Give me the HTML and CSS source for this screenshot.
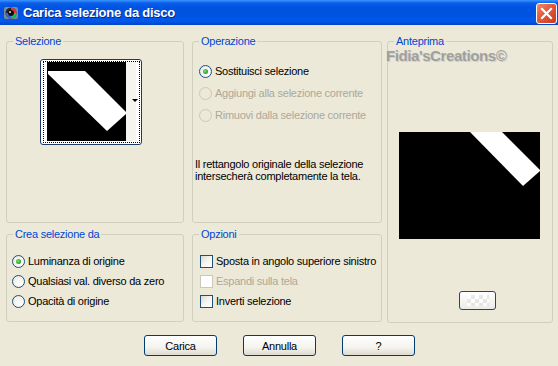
FILE: index.html
```html
<!DOCTYPE html>
<html>
    <head>
        <meta charset="UTF-8">
        <title>Carica selezione da disco</title>
        <link rel="stylesheet" href="styles.css">
    </head>
    <body>
        <div class="window">
            <div class="titlebar">
                <svg class="app-icon" width="16" height="16" viewBox="0 0 16 16">
                    <rect x="1" y="2" width="14" height="12" rx="2" fill="#7a8a9a"/>
                    <circle cx="8" cy="8" r="5.5" fill="#222"/>
                    <path d="M8 2.5 A5.5 5.5 0 0 1 13.5 8 L8 8 Z" fill="#e33"/>
                    <path d="M13.5 8 A5.5 5.5 0 0 1 8 13.5 L8 8 Z" fill="#2b6"/>
                    <path d="M8 13.5 A5.5 5.5 0 0 1 2.5 8 L8 8 Z" fill="#36d"/>
                    <circle cx="8" cy="8" r="3" fill="#111"/>
                    <circle cx="7" cy="7" r="1" fill="#ddd"/>
                </svg>
                <span class="title">Carica selezione da disco</span>
                <div class="close-btn">
                    <svg width="13" height="13" viewBox="0 0 13 13">
                        <path d="M2 2 L11 11 M11 2 L2 11" stroke="#fff" stroke-width="2.2" stroke-linecap="square"/>
                    </svg>
                </div>
            </div>

            <div class="content">
                <fieldset class="group sel-group">
                    <legend>Selezione</legend>
                    <div class="thumb">
                        <div class="thumb-focus">
                            <svg class="thumb-img" width="79" height="79" viewBox="0 0 79 79">
                                <rect width="79" height="79" fill="#000"/>
                                <polygon points="1,9 38,9 79,50 79,52 60,69 1,12" fill="#fff"/>
                            </svg>
                            <div class="thumb-strip"><span class="arrow"></span></div>
                        </div>
                    </div>
                </fieldset>

                <fieldset class="group op-group">
                    <legend>Operazione</legend>
                    <div class="group-body">
                        <div class="opt"><span class="radio checked"></span>Sostituisci selezione</div>
                        <div class="opt disabled"><span class="radio"></span>Aggiungi alla selezione corrente</div>
                        <div class="opt disabled"><span class="radio"></span>Rimuovi dalla selezione corrente</div>
                        <p class="note">Il rettangolo originale della selezione<br>intersecherà completamente la tela.</p>
                    </div>
                </fieldset>

                <fieldset class="group preview-group">
                    <legend>Anteprima</legend>
                    <span class="watermark">Fidia'sCreations©</span>
                    <div class="group-body">
                        <svg class="preview-img" width="141" height="107" viewBox="0 0 141 107">
                            <rect width="141" height="107" fill="#000"/>
                            <polygon points="71,0 103,0 141,38 141,39 124,54" fill="#fff"/>
                        </svg>
                        <div class="bg-btn"><span class="checker"></span></div>
                    </div>
                </fieldset>

                <fieldset class="group crea-group">
                    <legend>Crea selezione da</legend>
                    <div class="group-body">
                        <div class="opt slim"><span class="radio checked"></span>Luminanza di origine</div>
                        <div class="opt slim"><span class="radio"></span>Qualsiasi val. diverso da zero</div>
                        <div class="opt slim"><span class="radio"></span>Opacità di origine</div>
                    </div>
                </fieldset>

                <fieldset class="group opz-group">
                    <legend>Opzioni</legend>
                    <div class="group-body">
                        <div class="opt slim"><span class="check"></span>Sposta in angolo superiore sinistro</div>
                        <div class="opt slim disabled"><span class="check"></span>Espandi sulla tela</div>
                        <div class="opt slim"><span class="check"></span>Inverti selezione</div>
                    </div>
                </fieldset>
            </div>

            <div class="buttons">
                <button class="btn" type="button">Carica</button>
                <button class="btn" type="button">Annulla</button>
                <button class="btn" type="button">?</button>
            </div>
        </div>
    </body>
</html>
```

FILE: styles.css
```css
html, body {
    margin: 0;
    padding: 0;
}

body {
    width: 558px;
    height: 366px;
    overflow: hidden;
    background-color: #ece9d8;
    font-family: "Liberation Sans", Arial, sans-serif;
    font-size: 11px;
    letter-spacing: -0.25px;
    color: #000;
}

.window {
    width: 558px;
    height: 366px;
}

/* title bar */
.titlebar {
    height: 25px;
    display: flex;
    align-items: center;
    padding-left: 3px;
    box-sizing: border-box;
    background: linear-gradient(#3d95ff 0, #0a5fe9 3px, #0055e5 6px, #0052df 50%, #0058ea 85%, #0046c8 100%);
}

.app-icon {
    margin-right: 4px;
    margin-top: 1px;
}

.title {
    color: #fff;
    font-weight: bold;
    font-size: 13px;
    letter-spacing: -0.25px;
    text-shadow: 1px 1px 0 #0a2a8a;
    flex: 1;
}

.close-btn {
    width: 21px;
    height: 21px;
    box-sizing: border-box;
    margin-right: 1px;
    margin-top: 1px;
    border: 1px solid #fff;
    border-radius: 3px;
    background: linear-gradient(135deg, #f08a6a 0, #e2583a 45%, #c83c1e 100%);
    display: flex;
    align-items: center;
    justify-content: center;
}

/* group boxes */
.content {
    display: grid;
    grid-template-columns: 178px 198px 171px;
    grid-template-rows: 188px 94px;
    row-gap: 5px;
    padding: 10px 0 0 6px;
}

.group {
    box-sizing: border-box;
    margin: 0;
    padding: 0;
    border: 1px solid #d0d0bf;
    border-radius: 3px;
    min-width: 0;
}

.group legend {
    margin-left: 6px;
    padding: 0 2px;
    line-height: 13px;
    color: #0046d5;
}

.sel-group {
    grid-column: 1;
    grid-row: 1;
    width: 178px;
    height: 188px;
}

.op-group {
    grid-column: 2;
    grid-row: 1;
    width: 190px;
    height: 188px;
    justify-self: end;
}

.op-group .group-body {
    padding: 12px 0 0 6px;
}

.preview-group {
    grid-column: 3;
    grid-row: 1 / span 2;
    width: 166px;
    height: 288px;
    justify-self: end;
    align-self: start;
    position: relative;
}

.preview-group .group-body {
    padding-left: 11px;
}

.crea-group {
    grid-column: 1;
    grid-row: 2;
    width: 178px;
    height: 94px;
}

.crea-group .group-body {
    padding: 10px 0 0 5px;
}

.opz-group {
    grid-column: 2;
    grid-row: 2;
    width: 190px;
    height: 94px;
    justify-self: end;
}

.opz-group .group-body {
    padding: 10px 0 0 7px;
}

/* selection thumbnail */
.thumb {
    width: 102px;
    height: 86px;
    box-sizing: border-box;
    margin: 11px 0 0 33px;
    border: 1px solid #1b3a66;
    border-radius: 3px;
    background: #fff;
    padding: 1px 0 0 2px;
}

.thumb-focus {
    width: 97px;
    height: 82px;
    box-sizing: border-box;
    border: 1px dotted #000;
    display: flex;
    padding-left: 3px;
}

.thumb-img {
    display: block;
}

.thumb-strip {
    width: 10px;
    height: 79px;
    background: #f6f5f0;
    position: relative;
}

.arrow {
    position: absolute;
    left: 6px;
    top: 37px;
    border-left: 3px solid transparent;
    border-right: 3px solid transparent;
    border-top: 3px solid #000;
}

/* radio and check rows */
.opt {
    display: flex;
    align-items: center;
    height: 22px;
    gap: 3px;
    white-space: nowrap;
}

.opt.slim {
    height: 20px;
}

.opt.disabled {
    color: #aca899;
}

.radio {
    width: 13px;
    height: 13px;
    box-sizing: border-box;
    border: 1px solid #1c5180;
    border-radius: 50%;
    background: radial-gradient(circle at 65% 65%, #fff 0, #f2f1ea 60%, #dcdad0 100%);
    position: relative;
    flex: none;
}

.radio.checked::after {
    content: "";
    position: absolute;
    left: 3px;
    top: 3px;
    width: 5px;
    height: 5px;
    border-radius: 50%;
    background: radial-gradient(circle at 40% 40%, #7fe07f 0, #21a121 70%);
}

.disabled .radio {
    border-color: #cac8bb;
    background: #ece9d8;
}

.check {
    width: 13px;
    height: 13px;
    box-sizing: border-box;
    border: 1px solid #1c5180;
    background: linear-gradient(135deg, #dcdad0 0, #f6f5f0 50%, #fff 100%);
    flex: none;
}

.disabled .check {
    border-color: #cac8bb;
    background: #fff;
}

.note {
    margin: 32px 0 0 -4px;
    line-height: 12px;
}

/* preview */
.watermark {
    position: absolute;
    left: -2px;
    top: -1px;
    font-size: 15px;
    font-weight: bold;
    letter-spacing: -0.4px;
    color: rgba(140, 140, 140, 0.75);
    text-shadow: 1px 1px 0 rgba(200, 200, 200, 0.8);
}

.preview-img {
    display: block;
    margin-top: 84px;
}

.bg-btn {
    width: 37px;
    height: 19px;
    box-sizing: border-box;
    margin: 52px 0 0 60px;
    border: 1px solid #1c4a7e;
    border-radius: 3px;
    background: linear-gradient(#fff, #ecebe6);
    display: flex;
    align-items: center;
    justify-content: center;
}

.checker {
    width: 22px;
    height: 11px;
    background-color: #fff;
    background-image: conic-gradient(#e4e4e4 25%, #fff 0 50%, #e4e4e4 0 75%, #fff 0);
    background-size: 8px 8px;
    opacity: 0.8;
}

/* bottom buttons */
.buttons {
    display: flex;
    justify-content: center;
    gap: 26px;
    margin-top: 13px;
    padding-left: 1px;
}

.btn {
    width: 73px;
    height: 21px;
    box-sizing: border-box;
    border: 1px solid #003c74;
    border-radius: 3px;
    background: linear-gradient(#fff 0, #f4f3ee 60%, #dedbd0 100%);
    font-family: "Liberation Sans", Arial, sans-serif;
    font-size: 11px;
    letter-spacing: -0.25px;
    color: #000;
    padding: 0;
}
```
